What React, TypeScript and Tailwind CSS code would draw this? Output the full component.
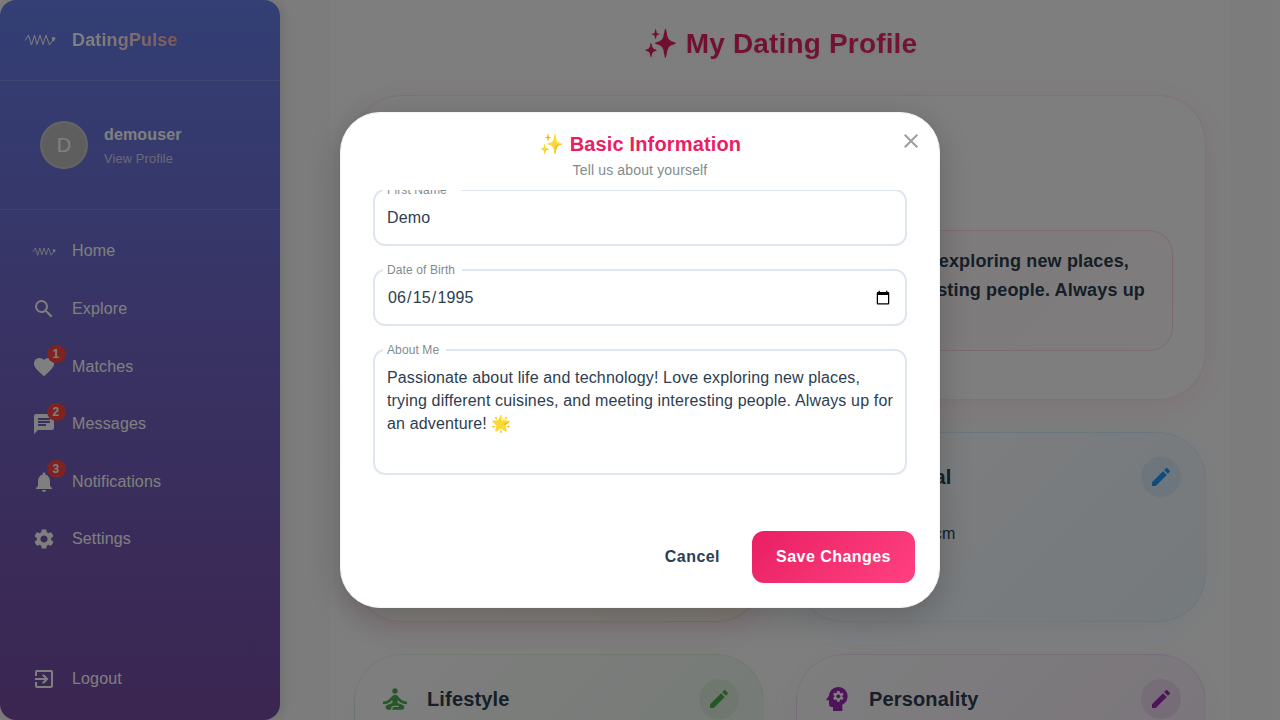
import type { ReactNode } from 'react';
import {
  MdSearch, MdFavorite, MdChat, MdNotifications, MdSettings, MdExitToApp,
  MdSelfImprovement, MdPsychology, MdEdit, MdClose, MdFitnessCenter, MdWork,
} from 'react-icons/md';

function PulseIcon({ className }: { className: string }) {
  return (
    <svg viewBox="0 0 32 14" className={className} fill="none" stroke="currentColor" strokeLinejoin="round" strokeLinecap="round">
      <path d="M1.5 7 L4.5 2.2 L7.5 12 L10.5 2.2 L13 11.5 L16 2.2 L19 11.5 L22 2.2 L25.5 12 L29.5 6" strokeWidth="1" />
      <path d="M29.5 8 L27.9 5.4 Q28 3.6 29.5 4.6 Q31 3.6 31.2 5.4 Z" fill="currentColor" strokeWidth="0.4" />
    </svg>
  );
}

function NavItem({ icon, label, badge }: { icon: ReactNode; label: string; badge?: number }) {
  return (
    <div className="flex h-[57.6px] items-center pl-8">
      <div className="relative flex size-6 items-center justify-center">
        {icon}
        {badge && (
          <span className="absolute -top-[9.6px] left-[14.5px] flex h-[18px] w-[19px] items-center justify-center rounded-full bg-[#ff4444] text-xs font-bold">
            {badge}
          </span>
        )}
      </div>
      <span className="ml-4">{label}</span>
    </div>
  );
}

function Sidebar() {
  return (
    <aside className="flex h-[720px] w-[280px] shrink-0 flex-col rounded-2xl bg-linear-to-b from-[#667eea] to-[#764ba2] text-white shadow-[4px_0_12px_rgba(0,0,0,0.1)]">
      <div className="flex h-[81px] items-center border-b border-white/15 pl-6">
        <PulseIcon className="h-[14px] w-8" />
        <span className="ml-4 bg-linear-to-r from-white from-20% to-[#ffb0b0] bg-clip-text text-lg font-bold tracking-[0.15px] text-transparent">
          DatingPulse
        </span>
      </div>
      <div className="flex h-[129px] items-center border-b border-white/15 pl-10">
        <div className="flex size-12 items-center justify-center rounded-full border-2 border-white/20 bg-[#bdbdbd] text-xl">D</div>
        <div className="ml-4 pt-1">
          <div className="font-bold leading-6">demouser</div>
          <div className="text-[12.8px] leading-6 text-white/70">View Profile</div>
        </div>
      </div>
      <nav className="flex flex-1 flex-col pt-[12.65px]">
        <NavItem icon={<PulseIcon className="h-[11px] w-6" />} label="Home" />
        <NavItem icon={<MdSearch className="size-6" />} label="Explore" />
        <NavItem icon={<MdFavorite className="size-6" />} label="Matches" badge={1} />
        <NavItem icon={<MdChat className="size-6" />} label="Messages" badge={2} />
        <NavItem icon={<MdNotifications className="size-6" />} label="Notifications" badge={3} />
        <NavItem icon={<MdSettings className="size-6" />} label="Settings" />
      </nav>
      <div className="pb-3">
        <NavItem icon={<MdExitToApp className="size-6" />} label="Logout" />
      </div>
    </aside>
  );
}

function Card({ title, icon, className, button, children }: {
  title: string; icon: ReactNode; className: string; button: string; children?: ReactNode;
}) {
  return (
    <section className={`h-[190px] rounded-[48px] border p-6 ${className}`}>
      <header className="flex h-10 items-center">
        {icon}
        <h2 className="ml-4 flex-1 text-xl font-bold tracking-[0.15px] text-[#2c3e50]">{title}</h2>
        <button className={`flex size-10 items-center justify-center rounded-full ${button}`}>
          <MdEdit className="size-6" />
        </button>
      </header>
      {children}
    </section>
  );
}

function Profile() {
  return (
    <main className="ml-[50px] h-[720px] w-[900px] shrink-0 overflow-hidden bg-white/60 px-6">
      <h1 className="flex h-[95px] items-center justify-center pb-[7px] text-[28px] font-bold">
        <span className="bg-linear-135 from-[#e91e63] to-[#ee2c6e] bg-clip-text tracking-[0.16px] text-transparent [text-shadow:0_2px_4px_rgba(0,0,0,0.06)]">
          ✨ My Dating Profile
        </span>
      </h1>
      <section className="h-[305px] rounded-[48px] border border-[#e91e63]/10 bg-[#fdfdfd] px-8 pt-[134px] shadow-[0_8px_32px_rgba(233,30,99,0.1)]">
        <div className="h-[121px] rounded-3xl border border-[#e91e63]/15 bg-linear-135 from-[#e91e63]/5 to-[#e91e63]/2 px-4 py-4 text-right text-lg font-bold leading-[28.8px] tracking-[0.15px] text-[#2c3e50]">
          <p className="pr-[27px]">Love exploring new places,</p>
          <p className="pr-[11px]">and meeting interesting people. Always up</p>
        </div>
      </section>
      <div className="mt-8 grid grid-cols-2 gap-8">
        <Card
          title="Career"
          icon={<MdWork className="size-8 text-[#ff9800]" />}
          className="border-[#e91e63]/15 bg-linear-135 from-white to-[#fdf2e6] shadow-[0_8px_32px_rgba(233,30,99,0.1)]"
          button="bg-[#ff9800]/10 text-[#ff9800]"
        />
        <Card
          title="Physical"
          icon={<MdFitnessCenter className="size-8 text-[#2196f3]" />}
          className="border-[#2196f3]/10 bg-linear-135 from-[#fdfdfd] to-[#eaf4fb] shadow-[0_8px_32px_rgba(33,150,243,0.08)]"
          button="bg-[#2196f3]/10 text-[#2196f3]"
        >
          <p className="mt-[25px] w-[134.5px] text-right leading-6 text-[#2c3e50]">175 cm</p>
        </Card>
        <Card
          title="Lifestyle"
          icon={<MdSelfImprovement className="size-8 text-[#4caf50]" />}
          className="border-[#4caf50]/10 bg-linear-135 from-[#fdfdfd] to-[#e9f5ea] shadow-[0_8px_32px_rgba(76,175,80,0.06)]"
          button="bg-[#4caf50]/10 text-[#4caf50]"
        />
        <Card
          title="Personality"
          icon={<MdPsychology className="size-8 text-[#9c27b0]" />}
          className="border-[#9c27b0]/10 bg-linear-135 from-[#fdfdfd] to-[#f4e8f6] shadow-[0_8px_32px_rgba(156,39,176,0.06)]"
          button="bg-[#9c27b0]/10 text-[#9c27b0]"
        />
      </div>
    </main>
  );
}

function Field({ label, notch, className, children }: { label: string; notch: string; className: string; children: ReactNode }) {
  return (
    <div className={`relative shrink-0 rounded-xl border-2 border-[#e0e6ef] px-3 ${className}`}>
      <span className={`absolute -top-[9px] left-2 bg-white px-1 text-xs leading-4 tracking-[0.11px] text-[#7f8c8d] ${notch}`}>{label}</span>
      {children}
    </div>
  );
}

function BasicInfoDialog() {
  return (
    <div className="relative flex h-[496px] w-[600px] flex-col rounded-[40px] border border-[#f3f3f3] bg-white text-[#2c3e50] shadow-[0_8px_32px_rgba(0,0,0,0.2)]">
      <div className="flex h-[77px] shrink-0 flex-col items-center pt-[15px]">
        <h2 className="text-xl leading-8 font-bold text-[#e91e63]">✨ Basic Information</h2>
        <p className="text-sm leading-5 text-[#7f8c8d]">Tell us about yourself</p>
      </div>
      <button className="absolute top-4 right-4 text-[#9e9e9e]">
        <MdClose className="size-6" />
      </button>
      <div className="flex h-[316px] shrink-0 flex-col overflow-hidden px-8">
        <Field label="First Name" notch="w-[78px]" className="-mt-px h-[57px]">
          <input className="h-[53px] w-full outline-none" defaultValue="Demo" />
        </Field>
        <Field label="Date of Birth" notch="w-[79px]" className="mt-[23px] h-[57px]">
          <input type="date" className="h-[53px] w-full outline-none" defaultValue="1995-06-15" />
        </Field>
        <Field label="About Me" notch="w-[63px]" className="mt-[23px] h-[126px]">
          <textarea
            className="mt-[15px] h-[92px] w-[510px] resize-none overflow-hidden leading-[23px] outline-none"
            defaultValue="Passionate about life and technology! Love exploring new places, trying different cuisines, and meeting interesting people. Always up for an adventure! 🌟"
          />
        </Field>
      </div>
      <div className="flex justify-end gap-2 px-6 pt-[25px] font-bold tracking-[0.457px]">
        <button className="h-[52px] px-6">Cancel</button>
        <button className="h-[52px] w-[163px] rounded-xl bg-linear-135 from-[#e91e63] to-[#ff4081] text-white">Save Changes</button>
      </div>
    </div>
  );
}

export default function App() {
  return (
    <div className="relative flex h-[720px] w-[1280px] overflow-hidden bg-[#f9f9f9] font-['Liberation_Sans',Arial,sans-serif] text-base tracking-[0.15008px]">
      <Sidebar />
      <Profile />
      <div className="absolute inset-0 flex items-center justify-center bg-black/50">
        <BasicInfoDialog />
      </div>
    </div>
  );
}
